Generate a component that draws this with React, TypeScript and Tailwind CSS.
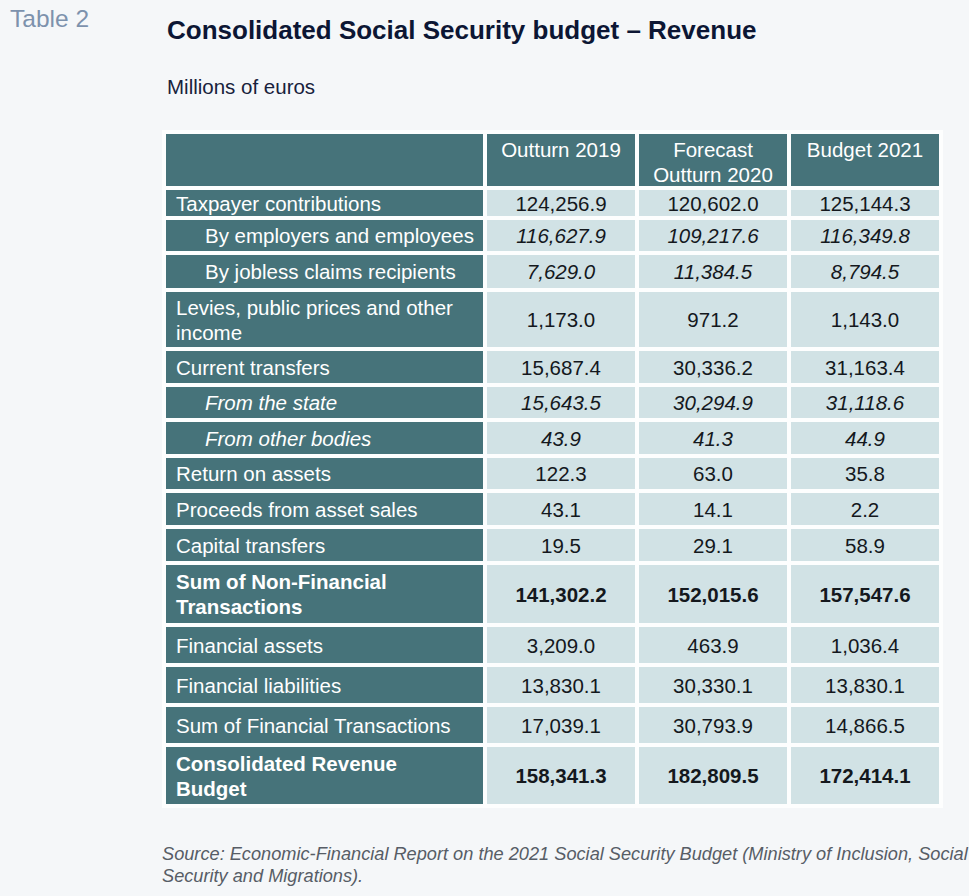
type Row = {
  label: string;
  values: [string, string, string];
  h: string;
  indent?: boolean;
  italicLabel?: boolean;
  italicValues?: boolean;
  bold?: boolean;
};

const rows: Row[] = [
  { label: 'Taxpayer contributions', values: ['124,256.9', '120,602.0', '125,144.3'], h: 'h-[26px]' },
  { label: 'By employers and employees', values: ['116,627.9', '109,217.6', '116,349.8'], h: 'h-[31px]', indent: true, italicValues: true },
  { label: 'By jobless claims recipients', values: ['7,629.0', '11,384.5', '8,794.5'], h: 'h-[33px]', indent: true, italicValues: true },
  { label: 'Levies, public prices and other income', values: ['1,173.0', '971.2', '1,143.0'], h: 'h-[55px]' },
  { label: 'Current transfers', values: ['15,687.4', '30,336.2', '31,163.4'], h: 'h-[32px]' },
  { label: 'From the state', values: ['15,643.5', '30,294.9', '31,118.6'], h: 'h-[31px]', indent: true, italicLabel: true, italicValues: true },
  { label: 'From other bodies', values: ['43.9', '41.3', '44.9'], h: 'h-[32px]', indent: true, italicLabel: true, italicValues: true },
  { label: 'Return on assets', values: ['122.3', '63.0', '35.8'], h: 'h-[31px]' },
  { label: 'Proceeds from asset sales', values: ['43.1', '14.1', '2.2'], h: 'h-[32px]' },
  { label: 'Capital transfers', values: ['19.5', '29.1', '58.9'], h: 'h-[32px]' },
  { label: 'Sum of Non-Financial Transactions', values: ['141,302.2', '152,015.6', '157,547.6'], h: 'h-[58px]', bold: true },
  { label: 'Financial assets', values: ['3,209.0', '463.9', '1,036.4'], h: 'h-[36px]' },
  { label: 'Financial liabilities', values: ['13,830.1', '30,330.1', '13,830.1'], h: 'h-[36px]' },
  { label: 'Sum of Financial Transactions', values: ['17,039.1', '30,793.9', '14,866.5'], h: 'h-[36px]' },
  { label: 'Consolidated Revenue Budget', values: ['158,341.3', '182,809.5', '172,414.1'], h: 'h-[57px]', bold: true },
];

const headers = ['Outturn 2019', 'Forecast Outturn 2020', 'Budget 2021'];

export default function App() {
  return (
    <div className="w-[969px] h-[896px] overflow-hidden bg-[#f5f7f9] font-['Liberation_Sans',Arial,sans-serif] flex">
      <div className="w-[166px] shrink-0 pl-[10px] pt-[5px] text-[24.5px] leading-[28px] text-[#7d92ad]">Table 2</div>

      <div className="flex-1 min-w-0">
        <h1 className="pt-[15px] pl-[1px] text-[26px] leading-[30px] font-bold text-[#0c1634] whitespace-nowrap">
          Consolidated Social Security budget – Revenue
        </h1>
        <p className="mt-[30px] pl-[1px] text-[20.5px] leading-[24px] text-[#18223c]">Millions of euros</p>

        <div className="mt-[31px] -ml-[4px] w-[781px] bg-[#fdfefe] p-[4px]">
          <div className="grid grid-cols-[317px_148px_148px_148px] gap-[4px] text-[20.5px] leading-[25px]">
            <div className="h-[52px] bg-[#46737a]" />
            {headers.map((h) => (
              <div key={h} className="h-[52px] bg-[#46737a] pt-[3px] px-2 text-center text-white">
                {h}
              </div>
            ))}

            {rows.map((r) => (
              <div key={r.label} className="contents">
                <div
                  className={`${r.h} bg-[#46737a] text-white flex items-center pr-2 ${r.indent ? 'pl-[39px]' : 'pl-[10px]'} ${
                    r.italicLabel ? 'italic' : ''
                  } ${r.bold ? 'font-bold' : ''}`}
                >
                  <span className={r.bold ? 'max-w-[260px]' : r.label.startsWith('Levies') ? 'max-w-[295px]' : ''}>{r.label}</span>
                </div>
                {r.values.map((v, i) => (
                  <div
                    key={i}
                    className={`${r.h} bg-[#d1e2e5] text-[#14181d] flex items-center justify-center ${
                      r.italicValues ? 'italic' : ''
                    } ${r.bold ? 'font-bold' : ''}`}
                  >
                    {v}
                  </div>
                ))}
              </div>
            ))}
          </div>
        </div>

        <p className="mt-[35px] -ml-[4px] text-[18.2px] leading-[22px] italic text-[#575d66] whitespace-nowrap">
          Source: Economic-Financial Report on the 2021 Social Security Budget (Ministry of Inclusion, Social
          <br />
          Security and Migrations).
        </p>
      </div>
    </div>
  );
}
